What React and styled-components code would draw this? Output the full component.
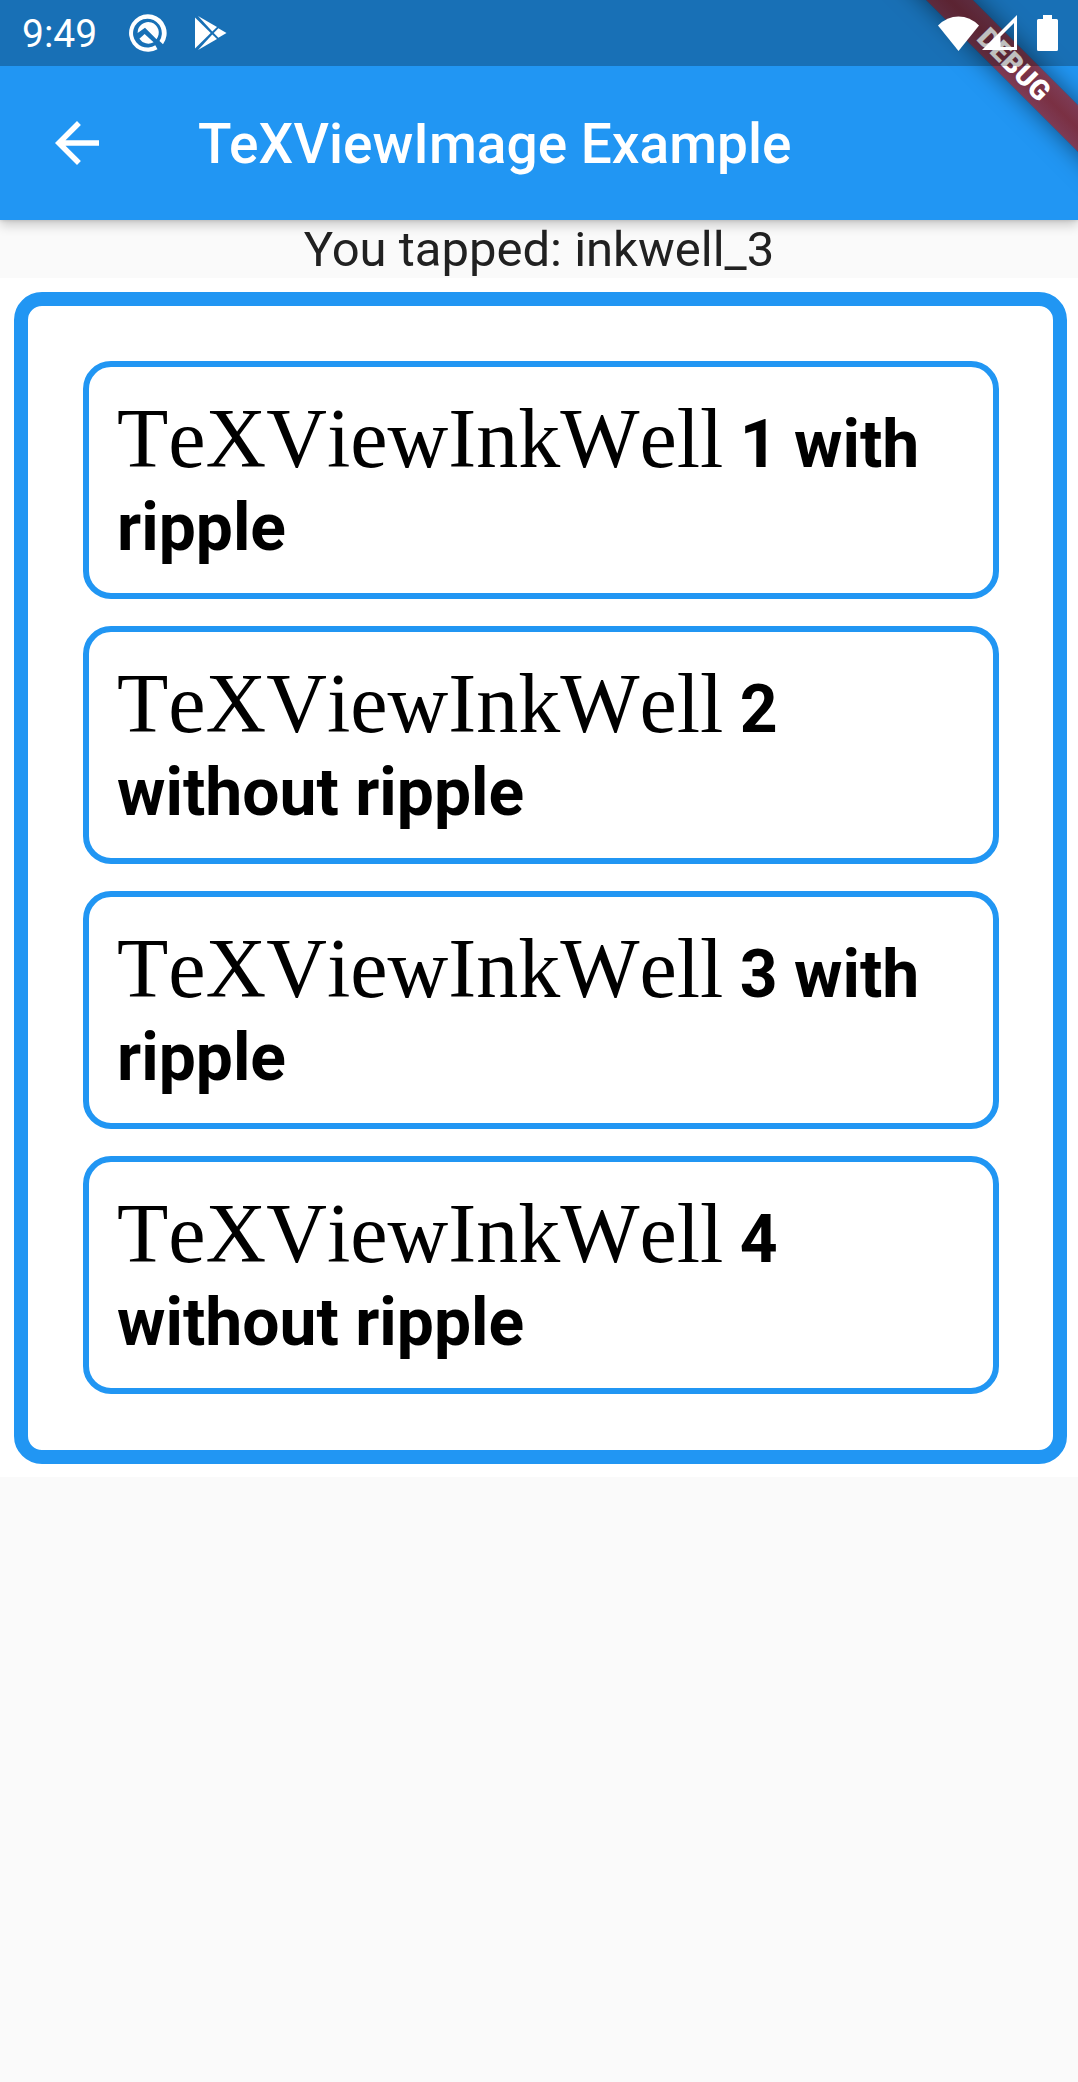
import React, { useState } from "react";
import styled, { createGlobalStyle } from "styled-components";

const BLUE = "#2196f3";

const GlobalStyle = createGlobalStyle`
  *, *::before, *::after { box-sizing: border-box; }
  body {
    margin: 0;
    background: #fafafa;
    font-family: Roboto, "Liberation Sans", sans-serif;
  }
`;

const Page = styled.div`
  min-height: 100vh;
`;

const Header = styled.header`
  position: relative;
  background: ${BLUE};
  box-shadow: 0 5px 11px rgba(0, 0, 0, 0.2), 0 0 4px rgba(0, 0, 0, 0.16);
`;

const StatusBar = styled.div`
  position: relative;
  z-index: 2;
  display: flex;
  align-items: center;
  justify-content: space-between;
  height: 66px;
  padding: 0 20px 0 22px;
  background: rgba(0, 0, 0, 0.25);
  color: #fff;
`;

const StatusGroup = styled.div`
  display: flex;
  align-items: center;
  gap: ${(p) => p.$gap}px;

  svg {
    display: block;
    fill: currentColor;
  }
`;

const Clock = styled.time`
  padding-top: 2px;
  margin-right: 4px;
  font-size: 39px;
  line-height: 44px;
`;

const AppBar = styled.div`
  display: flex;
  align-items: center;
  gap: 88px;
  height: 154px;
  padding: 0 44px;
`;

const BackButton = styled.button`
  display: flex;
  padding: 0;
  border: 0;
  background: none;
  color: #fff;
  cursor: pointer;

  svg {
    display: block;
    fill: currentColor;
  }
`;

const Title = styled.h1`
  margin: 0;
  padding-top: 2px;
  color: #fff;
  font-size: 55px;
  font-weight: 500;
  line-height: 64px;
`;

const BannerCorner = styled.div`
  position: absolute;
  z-index: 1;
  top: 0;
  right: 0;
  width: 220px;
  height: 220px;
  overflow: hidden;
  pointer-events: none;
`;

const Banner = styled.div`
  position: absolute;
  top: 48px;
  right: -96px;
  width: 320px;
  transform: rotate(45deg);
  background:
    linear-gradient(rgba(183, 28, 28, 0.63), rgba(183, 28, 28, 0.63)),
    linear-gradient(rgba(0, 0, 0, 0.25), rgba(0, 0, 0, 0.45), rgba(0, 0, 0, 0.25));
  box-shadow: 0 0 24px rgba(0, 0, 0, 0.5);
  color: #fff;
  font-size: 28px;
  font-weight: 900;
  line-height: 33px;
  text-align: center;
`;

const Tapped = styled.p`
  margin: 0;
  padding-top: 2px;
  color: #212121;
  font-size: 49px;
  line-height: 56px;
  text-align: center;
`;

const TeXView = styled.main`
  padding: 14px 11px 13px 14px;
  background: #fff;
`;

const Group = styled.div`
  display: flex;
  flex-direction: column;
  gap: 27px;
  padding: 55px 54px 56px 55px;
  border: 14px solid ${BLUE};
  border-radius: 28px;
`;

const InkWell = styled.button`
  display: block;
  width: 100%;
  padding: 36px 28px 24px;
  border: 6px solid ${BLUE};
  border-radius: 28px;
  background: #fff;
  color: #000;
  font-family: inherit;
  font-size: 66px;
  font-weight: 700;
  line-height: 83px;
  text-align: left;
  cursor: pointer;
`;

const Formula = styled.span`
  font-family: "Liberation Serif", serif;
  font-size: 84px;
  font-weight: 400;
  font-kerning: none;
  line-height: 1px;
`;

const QIcon = () => (
  <svg width="40" height="40" viewBox="0 0 40 40" aria-hidden="true">
    <path d="M29.5 36.2 A18.8 18.8 0 1 1 35 31.2 L31.5 28 A14.4 14.4 0 1 0 27.3 32.2 Z" />
    <path d="M9.6 20 A10.6 10.6 0 1 1 28.5 26.2 L17 14.8 Z" />
    <path d="M11.4 25.8 L16.6 21 L25.6 29.2 A10.6 10.6 0 0 1 11.4 25.8 Z" />
  </svg>
);

const PlayIcon = () => (
  <svg width="32" height="34" viewBox="0 0 32 34" aria-hidden="true">
    <path d="M0 1.5 L15.7 17 L0 32.5 Z" />
    <path d="M3 0 L22 11 L17.3 15.5 Z" />
    <path d="M3 34 L22 23 L17.3 18.5 Z" />
    <path d="M23.4 12.2 L31.5 17 L23.4 21.8 L18.7 17 Z" />
  </svg>
);

const WifiIcon = () => (
  <svg width="41" height="35" viewBox="0 0 41 35" aria-hidden="true">
    <path d="M20.5 35 L0 9.5 Q9 0.5 20.5 0.5 T41 9.5 Z" />
  </svg>
);

const SignalIcon = () => (
  <svg width="36" height="36" viewBox="0 0 36 36" aria-hidden="true">
    <path fillRule="evenodd" d="M0 35 L35 0 V35 Z M18.5 21.5 V32 H32 V8 Z" />
  </svg>
);

const BatteryIcon = () => (
  <svg width="21" height="36" viewBox="0 0 21 36" aria-hidden="true">
    <path d="M6 0 H15 V4 H19.5 Q21 4 21 5.5 V34.5 Q21 36 19.5 36 H1.5 Q0 36 0 34.5 V5.5 Q0 4 1.5 4 H6 Z" />
  </svg>
);

const BackIcon = () => (
  <svg width="66" height="66" viewBox="0 0 24 24" aria-hidden="true">
    <path d="M20 11H7.83l5.59-5.59L12 4l-8 8 8 8 1.41-1.41L7.83 13H20v-2z" />
  </svg>
);

const inkWells = [
  { id: "inkwell_1", label: "1 with ripple" },
  { id: "inkwell_2", label: "2 without ripple" },
  { id: "inkwell_3", label: "3 with ripple" },
  { id: "inkwell_4", label: "4 without ripple" },
];

export default function App() {
  const [tapped, setTapped] = useState("inkwell_3");

  return (
    <Page>
      <GlobalStyle />
      <Header>
        <StatusBar>
          <StatusGroup $gap={27}>
            <Clock>9:49</Clock>
            <QIcon />
            <PlayIcon />
          </StatusGroup>
          <StatusGroup $gap={19}>
            <StatusGroup $gap={3}>
              <WifiIcon />
              <SignalIcon />
            </StatusGroup>
            <BatteryIcon />
          </StatusGroup>
        </StatusBar>
        <AppBar>
          <BackButton type="button" aria-label="Back">
            <BackIcon />
          </BackButton>
          <Title>TeXViewImage Example</Title>
        </AppBar>
        <BannerCorner>
          <Banner>DEBUG</Banner>
        </BannerCorner>
      </Header>
      <Tapped>You tapped: {tapped}</Tapped>
      <TeXView>
        <Group>
          {inkWells.map(({ id, label }) => (
            <InkWell key={id} type="button" onClick={() => setTapped(id)}>
              <Formula>TeXViewInkWell</Formula> {label}
            </InkWell>
          ))}
        </Group>
      </TeXView>
    </Page>
  );
}
